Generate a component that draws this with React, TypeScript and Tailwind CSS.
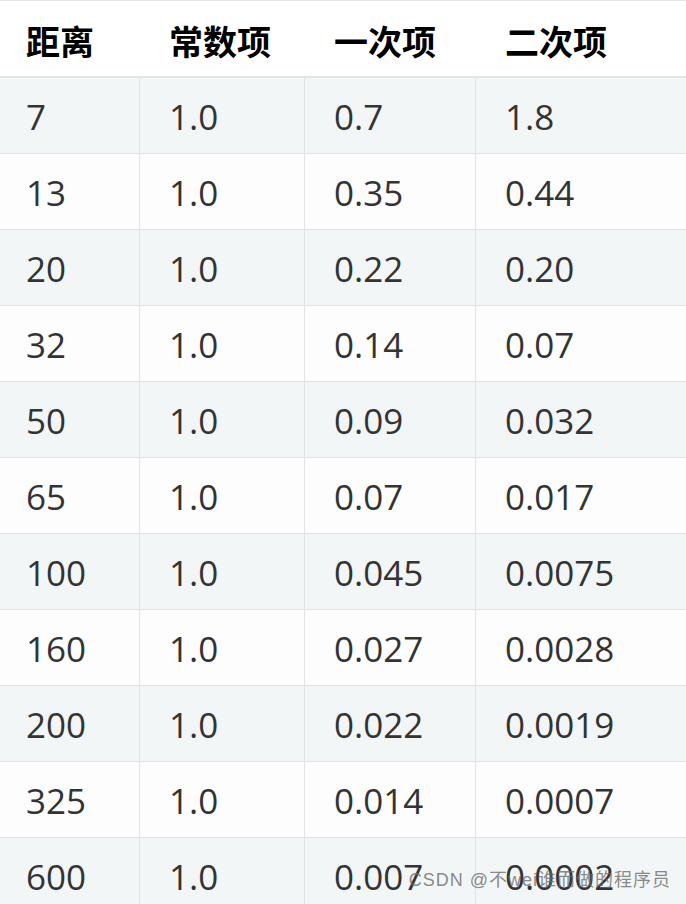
const rows = [
  ["7", "1.0", "0.7", "1.8"],
  ["13", "1.0", "0.35", "0.44"],
  ["20", "1.0", "0.22", "0.20"],
  ["32", "1.0", "0.14", "0.07"],
  ["50", "1.0", "0.09", "0.032"],
  ["65", "1.0", "0.07", "0.017"],
  ["100", "1.0", "0.045", "0.0075"],
  ["160", "1.0", "0.027", "0.0028"],
  ["200", "1.0", "0.022", "0.0019"],
  ["325", "1.0", "0.014", "0.0007"],
  ["600", "1.0", "0.007", "0.0002"],
];

const headers = ["距离", "常数项", "一次项", "二次项"];

const App = () => {
  return (
    <div className="relative w-[686px] h-[904px] overflow-hidden bg-white font-['Open_Sans','Noto_Sans_CJK_SC',sans-serif]">
      {/* header */}
      <div className="grid grid-cols-[140px_165px_171px_1fr] h-[78px] border-t border-b-2 border-[#e1e4e6] bg-white">
        {headers.map((h, i) => (
          <div
            key={h}
            className={`flex items-center pt-[4px] text-[34px] font-bold text-black font-['Noto_Sans_CJK_SC',sans-serif] ${i === 0 ? "pl-[26px]" : "pl-[29px]"}`}
          >
            {h}
          </div>
        ))}
      </div>

      {/* body rows */}
      {rows.map((r, idx) => (
        <div
          key={r[0]}
          className={`grid grid-cols-[140px_165px_171px_1fr] h-[76px] border-b border-[#e1e4e6] ${idx % 2 === 0 ? "bg-[#f3f6f7]" : "bg-[#fdfdfd]"}`}
        >
          {r.map((v, i) => (
            <div
              key={i}
              className={`flex items-center pt-[3px] text-[35px] text-[#333] ${i < 3 ? "border-r border-[#e1e4e6]" : ""} ${i === 0 ? "pl-[26px]" : "pl-[29px]"}`}
            >
              {v}
            </div>
          ))}
        </div>
      ))}

      {/* watermark */}
      <div className="absolute right-[15px] bottom-[10px] text-[18px] text-[#6b6b6b]/80 font-['Liberation_Sans','Noto_Sans_CJK_SC',sans-serif] tracking-[1px]">
        CSDN @不wei谁而做的程序员
      </div>
    </div>
  );
};

export default App;
